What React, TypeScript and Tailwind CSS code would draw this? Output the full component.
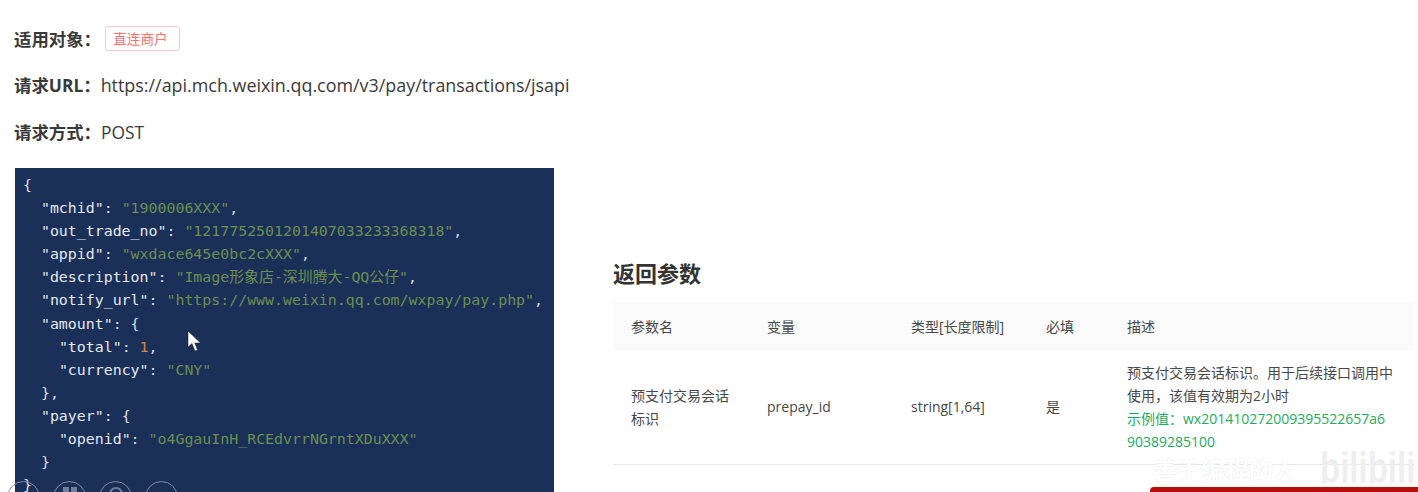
const sans = "font-['Open_Sans','Noto_Sans_CJK_SC',sans-serif]";
const mono = "font-['DejaVu_Sans_Mono','Noto_Sans_CJK_SC',monospace]";

function K({ children }: { children: React.ReactNode }) {
  return <span className="text-[#e4e8ee]">{children}</span>;
}
function S({ children }: { children: React.ReactNode }) {
  return <span className="text-[#6b8f4e]">{children}</span>;
}

function Code() {
  return (
    <pre className={`${mono} mt-[24px] ml-[15px] w-[539px] h-[324px] overflow-hidden bg-[#1a3059] pl-2 pt-[6px] text-[14.9px] leading-[23.1px] text-[#d8dde5]`}>
      <div>{"{"}</div>
      <div>  <K>"mchid"</K>: <S>"1900006XXX"</S>,</div>
      <div>  <K>"out_trade_no"</K>: <S>"1217752501201407033233368318"</S>,</div>
      <div>  <K>"appid"</K>: <S>"wxdace645e0bc2cXXX"</S>,</div>
      <div>  <K>"description"</K>: <S>"Image形象店-深圳腾大-QQ公仔"</S>,</div>
      <div>  <K>"notify_url"</K>: <S>"https://www.weixin.qq.com/wxpay/pay.php"</S>,</div>
      <div>  <K>"amount"</K>: {"{"}</div>
      <div>    <K>"total"</K>: <span className="text-[#d9824a]">1</span>,</div>
      <div>    <K>"currency"</K>: <S>"CNY"</S></div>
      <div>  {"},"}</div>
      <div>  <K>"payer"</K>: {"{"}</div>
      <div>    <K>"openid"</K>: <S>"o4GgauInH_RCEdvrrNGrntXDuXXX"</S></div>
      <div>  {"}"}</div>
      <div>{"}"}</div>
    </pre>
  );
}

function Cursor() {
  return (
    <svg className="absolute left-[187px] top-[330px]" width="15" height="23" viewBox="0 0 15 23">
      <path d="M1 1 L1 17 L5 13.5 L8 21 L10.5 20 L7.8 13 L13.5 13 Z" fill="#fff" stroke="#222" strokeWidth="0.5" />
    </svg>
  );
}

function Controls() {
  return (
    <div className="absolute left-[7px] top-[481px] flex gap-[13px]">
      {[0, 1, 2, 3].map((i) => (
        <div key={i} className="flex justify-center pt-[5px] w-[33px] h-[33px] rounded-full border border-[#7f8ca6]">
          {i === 1 && (
            <div className="grid grid-cols-2 gap-[2px] w-[14px]">
              <div className="h-[6px] bg-[#6f7e99]" />
              <div className="h-[6px] bg-[#6f7e99]" />
            </div>
          )}
          {i === 2 && <div className="w-[14px] h-[14px] rounded-full border-2 border-[#6f7e99]" />}
        </div>
      ))}
    </div>
  );
}

function Watermark() {
  return (
    <>
      <div className="absolute left-[1150px] top-[487px] w-[268px] h-[5px] rounded-tl-[4px] bg-[#b90d0d]" />
      <div className="absolute left-[1153px] top-[457px] text-[24px] leading-[26px] font-bold text-white [text-shadow:0_0_2px_#e4e4e4]">
        善于编程的人
      </div>
      <div className="absolute left-[1320px] top-[446px] origin-left scale-x-75 text-[44px] leading-[44px] font-bold text-[#efefef] font-['Liberation_Sans',sans-serif]">
        bilibili
      </div>
    </>
  );
}

export default function App() {
  return (
    <div className={`${sans} relative w-[1418px] h-[492px] overflow-hidden bg-white text-[#3a3a3a]`}>
      <div className="flex">
        <div className="w-[613px] shrink-0">
          <div className="ml-[14px] pt-[26px] flex items-center h-[51px] text-[17.4px] leading-[24px]">
            <span className="font-bold">适用对象：</span>
            <span className="ml-[4px] pr-[4px] h-[25px] w-[75px] flex items-center justify-center rounded-[3px] border border-[#fbc9c9] text-[13.6px] text-[#f7736f]">直连商户</span>
          </div>
          <div className="ml-[14px] mt-[22px] leading-[24px] h-[24px] whitespace-nowrap">
            <span className="font-bold text-[17.4px]">请求URL：</span>
            <span className="text-[17.9px]">https://api.mch.weixin.qq.com/v3/pay/transactions/jsapi</span>
          </div>
          <div className="ml-[14px] mt-[23px] leading-[24px] h-[24px] whitespace-nowrap">
            <span className="font-bold text-[17.4px]">请求方式：</span>
            <span className="text-[17.4px]">POST</span>
          </div>
          <Code />
        </div>
        <div className="w-[801px] shrink-0 pt-[259px]">
          <h2 className="text-[22px] leading-[28px] font-bold text-[#333]">返回参数</h2>
          <table className="mt-[16px] w-[801px] table-fixed border-collapse text-[14px] leading-[23px] text-[#484848]">
            <colgroup>
              <col className="w-[136px]" />
              <col className="w-[144px]" />
              <col className="w-[135px]" />
              <col className="w-[81px]" />
              <col />
            </colgroup>
            <thead>
              <tr className="h-[47px] bg-[#fafafa] text-left">
                <th className="pl-[18px] font-normal">参数名</th>
                <th className="pl-[18px] font-normal">变量</th>
                <th className="pl-[18px] font-normal">类型[长度限制]</th>
                <th className="pl-[18px] font-normal">必填</th>
                <th className="pl-[18px] font-normal">描述</th>
              </tr>
            </thead>
            <tbody>
              <tr className="h-[114px] border-b border-[#e8e8e8]">
                <td className="pl-[18px] pr-[20px]">预支付交易会话标识</td>
                <td className="pl-[18px]">prepay_id</td>
                <td className="pl-[18px]">string[1,64]</td>
                <td className="pl-[18px]">是</td>
                <td className="pl-[18px] whitespace-nowrap">
                  预支付交易会话标识。用于后续接口调用中
                  <br />
                  使用，该值有效期为2小时
                  <div className="text-[#1aad5f]">
                    示例值：wx201410272009395522657a6
                    <br />
                    90389285100
                  </div>
                </td>
              </tr>
            </tbody>
          </table>
        </div>
      </div>
      <Cursor />
      <Controls />
      <Watermark />
    </div>
  );
}
